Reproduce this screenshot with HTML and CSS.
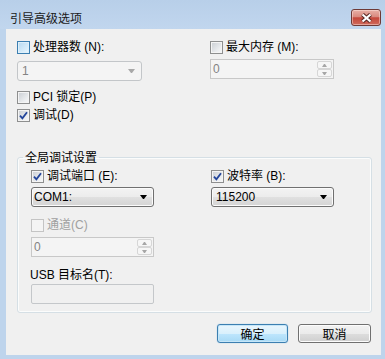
FILE: index.html
```html
<!DOCTYPE html>
<html lang="zh-CN">
<head>
<meta charset="utf-8">
<title>引导高级选项</title>
<link rel="stylesheet" href="styles.css">
</head>
<body>
<div class="window">
  <div class="titlebar">
    <span class="title">引导高级选项</span>
    <div class="close">
      <svg width="15" height="10" viewBox="0 0 15 10">
        <path class="x-out" d="M3.5 1.5 L11.5 8.5 M11.5 1.5 L3.5 8.5"/>
        <path class="x-in" d="M3.5 1.5 L11.5 8.5 M11.5 1.5 L3.5 8.5"/>
      </svg>
    </div>
  </div>
  <div class="client">
    <div class="row-top">
      <div class="col-left">
        <div class="check"><span class="box hot"></span><span>处理器数 (N):</span></div>
        <div class="combo disabled combo-cpu"><span class="val">1</span><span class="arrow"></span></div>
      </div>
      <div class="col-right">
        <div class="check"><span class="box"></span><span>最大内存 (M):</span></div>
        <div class="spin disabled spin-mem"><span class="val">0</span><span class="spin-btns"><span class="sb"><span class="up"></span></span><span class="sb"><span class="down"></span></span></span></div>
      </div>
    </div>
    <div class="check pci"><span class="box"></span><span>PCI 锁定(P)</span></div>
    <div class="check debug"><span class="box"><svg class="tick" width="9" height="9" viewBox="0 0 9 9"><path d="M1 4.6 L3.4 7.4 L8 1.2"/></svg></span><span>调试(D)</span></div>

    <fieldset class="group">
      <legend>全局调试设置</legend>
      <div class="group-body">
        <div class="group-grid">
          <div class="gcol-left">
            <div class="check"><span class="box"><svg class="tick" width="9" height="9" viewBox="0 0 9 9"><path d="M1 4.6 L3.4 7.4 L8 1.2"/></svg></span><span>调试端口 (E):</span></div>
            <div class="combo enabled combo-port"><span class="val">COM1:</span><span class="arrow"></span></div>
          </div>
          <div class="gcol-right">
            <div class="check"><span class="box"><svg class="tick" width="9" height="9" viewBox="0 0 9 9"><path d="M1 4.6 L3.4 7.4 L8 1.2"/></svg></span><span>波特率 (B):</span></div>
            <div class="combo enabled combo-baud"><span class="val">115200</span><span class="arrow"></span></div>
          </div>
        </div>
        <div class="check disabled-check channel"><span class="box off"></span><span>通道(C)</span></div>
        <div class="spin disabled spin-chan"><span class="val">0</span><span class="spin-btns"><span class="sb"><span class="up"></span></span><span class="sb"><span class="down"></span></span></span></div>
        <div class="usb-label">USB 目标名(T):</div>
        <div class="textbox"></div>
      </div>
    </fieldset>

    <div class="buttons">
      <button class="btn default">确定</button>
      <button class="btn">取消</button>
    </div>
  </div>
</div>
</body>
</html>
```

FILE: styles.css
```css
html, body {
  margin: 0;
  padding: 0;
}
body {
  width: 385px;
  height: 359px;
  overflow: hidden;
  font-family: "Liberation Sans", "Noto Sans CJK SC", sans-serif;
  font-size: 12px;
  color: #000;
}
.window {
  width: 385px;
  height: 359px;
  display: flex;
  flex-direction: column;
  background: #bed4ec;
}
.titlebar {
  flex: none;
  height: 29px;
  box-sizing: border-box;
  display: flex;
  align-items: flex-start;
  padding-left: 10px;
  background: linear-gradient(#b8cfe9, #c1d6ee);
}
.title {
  margin-top: 10px;
  line-height: 16px;
  font-size: 12px;
  font-family: "Noto Sans CJK SC", sans-serif;
  color: #1a1a1a;
}
.close {
  margin-left: auto;
  margin-top: 9px;
  margin-right: 4px;
  width: 30px;
  height: 17px;
  box-sizing: border-box;
  border: 1px solid #6e3a36;
  border-radius: 3px;
  background: linear-gradient(#e8b0a6 0%, #d98a7f 45%, #c4473a 52%, #cf6a5c 100%);
  box-shadow: inset 0 0 0 1px rgba(255, 235, 230, 0.45);
  display: flex;
  align-items: center;
  justify-content: center;
}
.x-out {
  stroke: #5a2a26;
  stroke-width: 4.2;
  fill: none;
}
.x-in {
  stroke: #ffffff;
  stroke-width: 2.2;
  fill: none;
}
.client {
  margin: 0 4px 4px 6px;
  height: 326px;
  box-sizing: border-box;
  background: #f0f0f0;
  padding: 11px 0 0 11px;
}
.row-top {
  display: flex;
}
.col-left {
  width: 193px;
}
.check {
  display: flex;
  align-items: center;
  gap: 3px;
  height: 15px;
  line-height: 15px;
  white-space: nowrap;
}
.box {
  flex: none;
  width: 13px;
  height: 13px;
  box-sizing: border-box;
  border: 1px solid #8e8f8f;
  background: linear-gradient(135deg, #c9cdd2 0%, #eceef0 70%, #f8f8f8 100%);
  box-shadow: inset 0 0 0 1px #f4f4f4;
  display: flex;
  align-items: center;
  justify-content: center;
}
.box.hot {
  border-color: #3c7fb1;
  background: linear-gradient(135deg, #b7d9f1 0%, #d9eefb 70%, #eef8fe 100%);
  box-shadow: inset 0 0 0 1px #def0fb;
}
.box.off {
  border-color: #c4c4c4;
  background: #f4f4f4;
  box-shadow: none;
}
.tick path {
  fill: none;
  stroke: #22449a;
  stroke-width: 1.8;
}
.disabled-check {
  color: #a0a0a0;
}
.combo, .spin, .textbox {
  box-sizing: border-box;
  height: 20px;
  display: flex;
  align-items: center;
}
.val {
  line-height: 16px;
}
.combo {
  border-radius: 3px;
  padding-left: 4px;
}
.combo.disabled {
  border: 1px solid #c3c6c9;
  background: #f4f4f4;
  color: #838383;
}
.combo.enabled {
  border: 1px solid #707070;
  background: linear-gradient(#f3f3f3 0%, #ececec 50%, #e0e0e0 51%, #d4d4d4 100%);
  box-shadow: inset 0 0 0 1px #fbfbfb;
}
.arrow {
  margin-left: auto;
  margin-right: 6px;
  width: 1px;
  height: 0;
  border-left: 3px solid transparent;
  border-right: 3px solid transparent;
  border-top: 4px solid #000;
}
.combo.disabled .arrow {
  border-top-color: #a8a8a8;
}
.combo-cpu {
  margin-top: 6px;
  width: 125px;
}
.spin {
  border: 1px solid #c8c8c8;
  background: #f4f4f4;
  color: #838383;
  padding-left: 2px;
}
.spin-mem {
  margin-top: 4px;
  width: 124px;
}
.spin-btns {
  margin-left: auto;
  margin-right: 1px;
  width: 15px;
  height: 16px;
  display: flex;
  flex-direction: column;
}
.sb {
  flex: 1;
  box-sizing: border-box;
  border: 1px solid #d6d6d6;
  border-radius: 2px;
  background: #f6f6f6;
  display: flex;
  align-items: center;
  justify-content: center;
}
.up, .down {
  width: 1px;
  height: 0;
  border-left: 2px solid transparent;
  border-right: 2px solid transparent;
}
.up {
  border-bottom: 3px solid #a6a6a6;
}
.down {
  border-top: 3px solid #a6a6a6;
}
.pci {
  margin-top: 9px;
}
.debug {
  margin-top: 3px;
}
.group {
  margin: 27px 0 0 0;
  padding: 0;
  width: 355px;
  box-sizing: border-box;
  border: 1px solid #d5dfe5;
  border-radius: 3px;
  box-shadow: inset 0 0 0 1px #fbfcfc;
  min-inline-size: 0;
}
.group legend {
  margin-left: 5px;
  padding: 0 2px;
  line-height: 14px;
  font-size: 12px;
  font-family: "Noto Sans CJK SC", sans-serif;
}
.group-body {
  padding: 5px 0 8px 13px;
}
.group-grid {
  display: flex;
}
.gcol-left {
  width: 180px;
}
.combo-port, .combo-baud {
  margin-top: 3px;
  width: 123px;
}
.combo-port {
  padding-left: 2px;
}
.channel {
  margin-top: 11px;
}
.spin-chan {
  margin-top: 4px;
  width: 123px;
}
.usb-label {
  margin-top: 11px;
  height: 15px;
  line-height: 15px;
  margin-left: -1px;
}
.textbox {
  margin-top: 1px;
  width: 123px;
  border: 1px solid #c4c7ca;
  border-radius: 2px;
  background: #f0f0f0;
}
.buttons {
  margin-top: 11px;
  padding-right: 10px;
  display: flex;
  justify-content: flex-end;
  gap: 10px;
}
.btn {
  height: 19px;
  width: 73px;
  box-sizing: border-box;
  padding: 0;
  font-family: "Noto Sans CJK SC", sans-serif;
  font-size: 12px;
  line-height: 15px;
  color: #000;
  border: 1px solid #707070;
  border-radius: 3px;
  background: linear-gradient(#f2f2f2 0%, #ebebeb 50%, #dddddd 51%, #cfcfcf 100%);
  box-shadow: inset 0 0 0 1px #fcfcfc;
}
.btn.default {
  width: 71px;
  border-color: #3c7fb1;
  background: linear-gradient(#eaf6fd 0%, #d9f0fc 50%, #bee6fd 51%, #a7d9f5 100%);
  box-shadow: inset 0 0 0 1px #c6e6f8, 0 0 1px #6cb3e0;
}
```
